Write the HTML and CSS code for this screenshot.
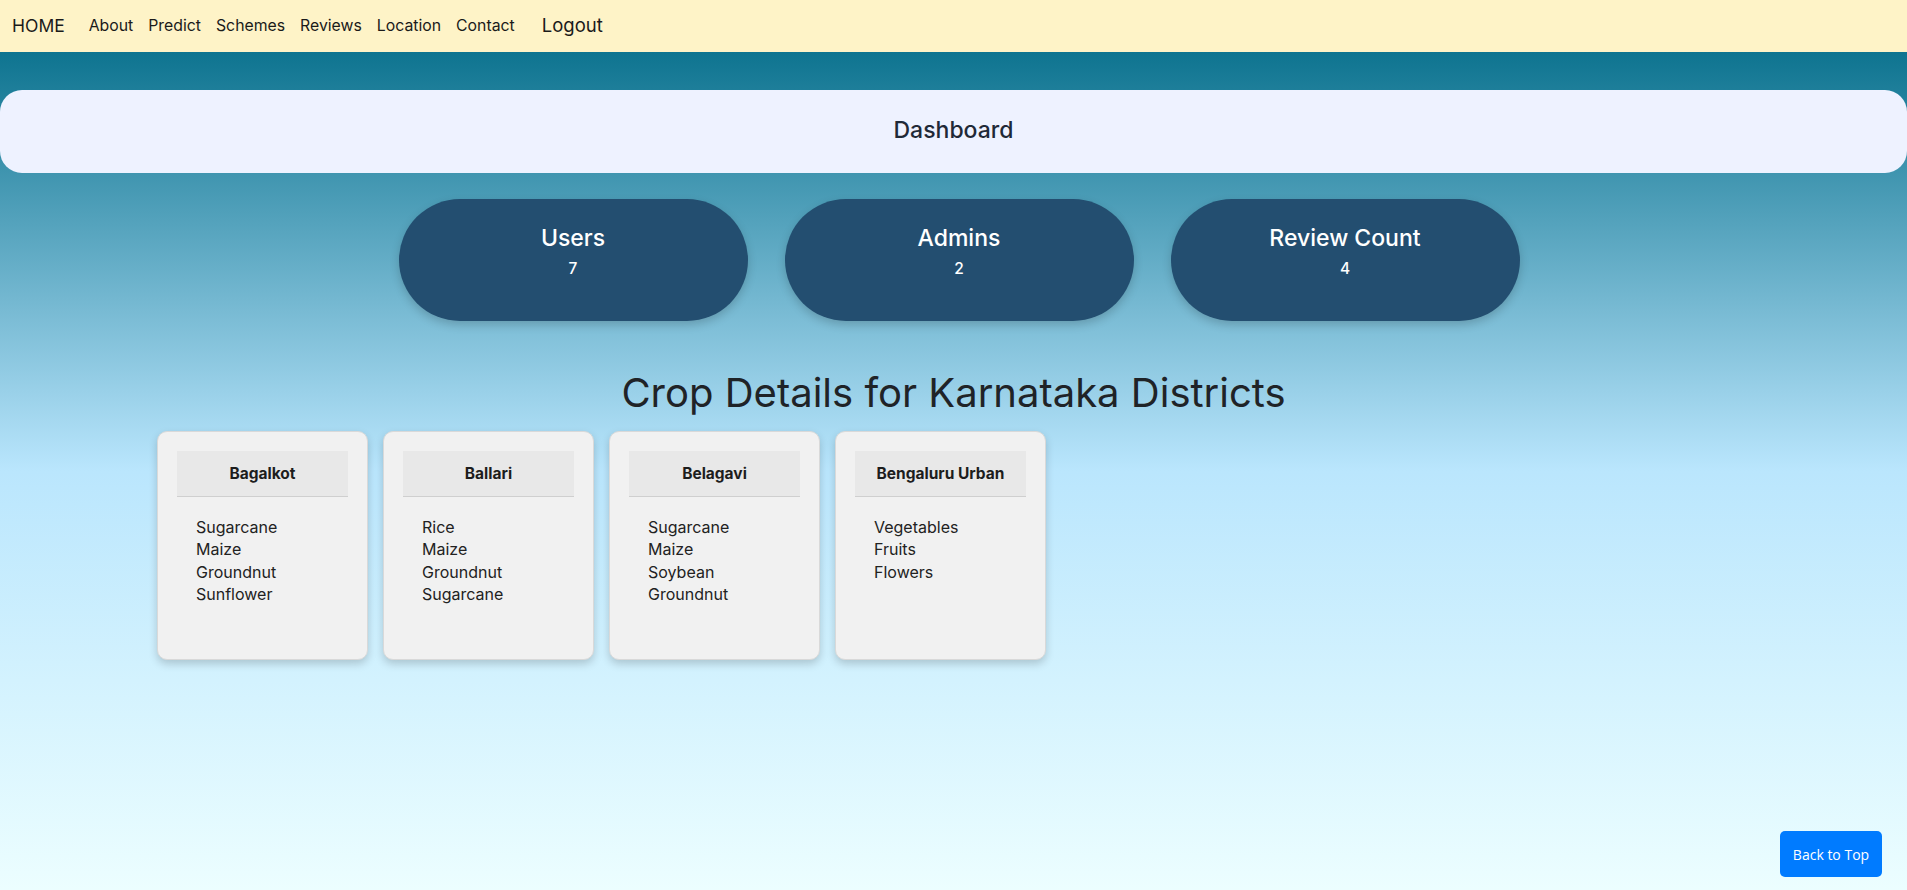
FILE: index.html
```html
<!DOCTYPE html>
<html lang="en">
<head>
<meta charset="utf-8">
<title>Dashboard</title>
<link rel="stylesheet" href="styles.css">
</head>
<body>
<nav class="navbar">
  <a class="brand" href="#">HOME</a>
  <ul class="nav-links">
    <li><a href="#">About</a></li>
    <li><a href="#">Predict</a></li>
    <li><a href="#">Schemes</a></li>
    <li><a href="#">Reviews</a></li>
    <li><a href="#">Location</a></li>
    <li><a href="#">Contact</a></li>
  </ul>
  <a class="logout" href="#">Logout</a>
</nav>
<main class="main">
  <header class="dash-panel">
    <h2 class="dash-title">Dashboard</h2>
  </header>
  <section class="stats">
    <div class="stat">
      <h3 class="stat-title">Users</h3>
      <p class="stat-value">7</p>
    </div>
    <div class="stat">
      <h3 class="stat-title">Admins</h3>
      <p class="stat-value">2</p>
    </div>
    <div class="stat">
      <h3 class="stat-title">Review Count</h3>
      <p class="stat-value">4</p>
    </div>
  </section>
  <h1 class="section-title">Crop Details for Karnataka Districts</h1>
  <section class="cards">
    <div class="card">
      <div class="card-header">Bagalkot</div>
      <ul class="crop-list">
        <li>Sugarcane</li>
        <li>Maize</li>
        <li>Groundnut</li>
        <li>Sunflower</li>
      </ul>
    </div>
    <div class="card">
      <div class="card-header">Ballari</div>
      <ul class="crop-list">
        <li>Rice</li>
        <li>Maize</li>
        <li>Groundnut</li>
        <li>Sugarcane</li>
      </ul>
    </div>
    <div class="card">
      <div class="card-header">Belagavi</div>
      <ul class="crop-list">
        <li>Sugarcane</li>
        <li>Maize</li>
        <li>Soybean</li>
        <li>Groundnut</li>
      </ul>
    </div>
    <div class="card">
      <div class="card-header">Bengaluru Urban</div>
      <ul class="crop-list">
        <li>Vegetables</li>
        <li>Fruits</li>
        <li>Flowers</li>
      </ul>
    </div>
  </section>
</main>
<a class="back-top" href="#">Back to Top</a>
</body>
</html>
```
FILE: styles.css
```css
* { box-sizing: border-box; }

html, body {
  margin: 0;
  padding: 0;
}

body {
  font-family: "Inter", "Open Sans", sans-serif;
  color: #212529;
  background: #ecfeff;
}

a { text-decoration: none; color: inherit; }

.navbar {
  height: 52px;
  background: #fef3c7;
  display: flex;
  align-items: center;
  padding-left: 12px;
  padding-bottom: 2px;
}

.brand {
  font-size: 17.5px;
  color: #1a1a1a;
  margin-right: 24px;
}

.nav-links {
  list-style: none;
  margin: 0;
  padding: 0;
  display: flex;
  gap: 15px;
  font-size: 15.8px;
  color: #1a1a1a;
}

.logout {
  margin-left: 27px;
  font-size: 18.5px;
  color: #1a1a1a;
}

.main {
  min-height: 838px;
  background: linear-gradient(to bottom, #0e7490 0%, #bae6fd 50%, #ecfeff 100%);
  padding-top: 38px;
  padding-bottom: 40px;
}

.dash-panel {
  background: #eef2ff;
  border-radius: 22px;
  height: 83px;
  display: flex;
  align-items: center;
  justify-content: center;
  padding-bottom: 4px;
}

.dash-title {
  margin: 0;
  font-size: 23px;
  font-weight: 500;
  color: #1f2937;
}

.stats {
  display: flex;
  justify-content: center;
  gap: 37px;
  margin-top: 26px;
  padding-left: 11px;
}

.stat {
  width: 349px;
  height: 122px;
  background: #234e70;
  border-radius: 61px;
  box-shadow: 0 4px 10px rgba(0, 0, 0, 0.18);
  color: #fff;
  text-align: center;
  padding-top: 24px;
}

.stat-title {
  margin: 0;
  font-size: 23px;
  line-height: 30px;
  font-weight: 500;
}

.stat-value {
  margin: 4px 0 0;
  font-size: 15.5px;
  line-height: 24px;
  font-weight: 500;
}

.section-title {
  margin: 47px 0 13px;
  text-align: center;
  font-size: 40px;
  line-height: 50px;
  font-weight: 400;
  color: #1f2327;
}

.cards {
  display: flex;
  gap: 15px;
  padding-left: 157px;
}

.card {
  width: 211px;
  min-height: 229px;
  background: #f1f1f1;
  border: 1px solid #d9d9d9;
  border-radius: 10px;
  box-shadow: 0 4px 8px rgba(0, 0, 0, 0.18);
  padding: 19px;
}

.card-header {
  background: #e8e8e8;
  border-bottom: 1px solid #cfcfcf;
  text-align: center;
  font-size: 15.5px;
  font-weight: 700;
  line-height: 21px;
  padding: 12px 4px;
  color: #1d1d1d;
  white-space: nowrap;
}

.crop-list {
  list-style: none;
  margin: 19px 0 0;
  padding: 0 0 0 19px;
  font-size: 16px;
  line-height: 22.3px;
  color: #222;
}

.back-top {
  position: fixed;
  right: 25px;
  bottom: 13px;
  width: 102px;
  height: 46px;
  background: #007bff;
  color: #fff;
  border-radius: 5px;
  font-family: "Open Sans", "Liberation Sans", sans-serif;
  font-size: 14px;
  display: flex;
  align-items: center;
  justify-content: center;
}
```
